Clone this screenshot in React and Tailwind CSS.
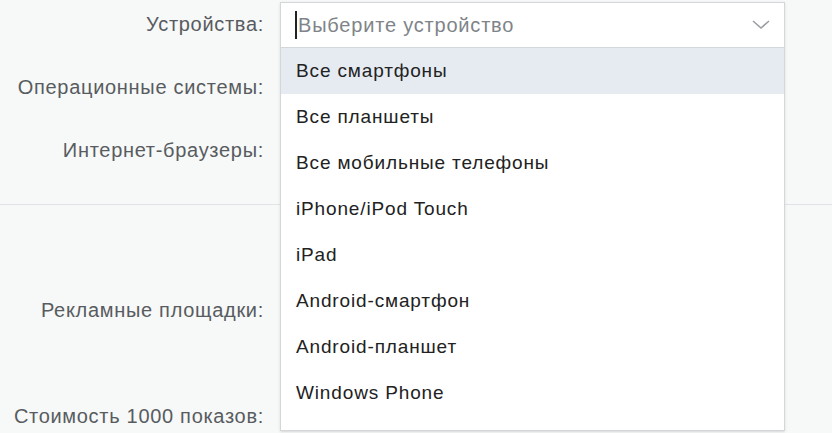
const devices = [
  'Все смартфоны',
  'Все планшеты',
  'Все мобильные телефоны',
  'iPhone/iPod Touch',
  'iPad',
  'Android-смартфон',
  'Android-планшет',
  'Windows Phone',
]

function Row({ label }) {
  return (
    <div className="flex h-[44px] items-center">
      <div className="w-[280px] pr-[16px] text-right text-[20px] tracking-[0.035em] text-[#585c60]">{label}</div>
    </div>
  )
}

export default function App() {
  return (
    <div className="relative h-[433px] w-[832px] overflow-hidden bg-[#f7f8f8] font-['Liberation_Sans',Arial,sans-serif]">
      <div className="flex flex-col gap-[19px] border-b border-[#e1e4e6] pt-[2px] pb-[32px]">
        <Row label="Устройства:" />
        <Row label="Операционные системы:" />
        <Row label="Интернет-браузеры:" />
      </div>
      <div className="flex flex-col gap-[62px] pt-[83px]">
        <Row label="Рекламные площадки:" />
        <Row label="Стоимость 1000 показов:" />
      </div>

      <div className="absolute left-[280px] top-[2px] w-[505px] border border-[#d3d7db] bg-white shadow-sm">
        <div className="flex h-[45px] items-center border-b border-[#d3d7db] pl-[14px] pr-[12px]">
          <span className="mr-[1px] h-[28px] w-[2px] bg-[#222]" />
          <span className="flex-1 text-[20px] tracking-[0.04em] text-[#808489]">Выберите устройство</span>
          <svg width="20" height="12" viewBox="0 0 20 12" className="mr-[1px]">
            <path d="M2 2l8 7 8-7" fill="none" stroke="#9a9ea3" strokeWidth="1.6" />
          </svg>
        </div>
        <ul className="pb-[14px]">
          {devices.map((d, i) => (
            <li
              key={d}
              className={`flex h-[46px] items-center pl-[15px] text-[19px] tracking-[0.045em] text-[#222] ${
                i === 0 ? 'bg-[#e5ebf1]' : ''
              }`}
            >
              {d}
            </li>
          ))}
        </ul>
      </div>
    </div>
  )
}
